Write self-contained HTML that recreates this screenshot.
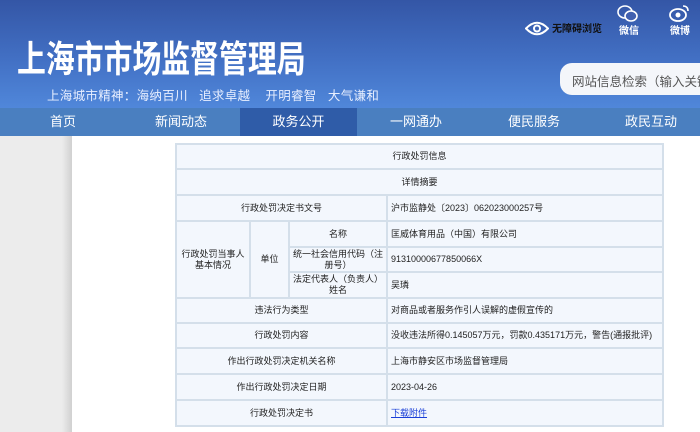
<!DOCTYPE html>
<html><head><meta charset="utf-8"><style>
*{margin:0;padding:0;box-sizing:border-box}
body{width:700px;height:432px;overflow:hidden;font-family:"Liberation Sans","Noto Sans CJK SC",sans-serif;background:#fff;position:relative}
.banner{position:absolute;left:0;top:0;width:700px;height:108px;background:linear-gradient(180deg,#3456a6 0%,#4270c4 55%,#5087da 100%)}
.title{position:absolute;left:17px;top:29px;font-size:37px;font-weight:bold;color:#fff;white-space:nowrap;transform:scaleX(0.78);transform-origin:left top;letter-spacing:0}
.slogan{position:absolute;left:47px;top:85px;font-size:12.5px;color:#e8efff;white-space:nowrap;letter-spacing:0.3px}
.search{position:absolute;left:560px;top:63px;width:160px;height:32px;border-radius:12px;background:#f4f6fa;font-size:12.5px;color:#555;padding:8px 0 0 12px;white-space:nowrap}
.acc{position:absolute;left:552px;top:20px;font-size:10px;color:#111;font-weight:bold}
.ic{position:absolute;font-size:10px;color:#fff;font-weight:bold}
.nav{position:absolute;left:0;top:108px;width:700px;height:28px;background:#4a7fc0}
.nav div{position:absolute;top:0;height:28px;line-height:28px;color:#fff;font-size:13px;text-align:center;width:118px}
.gray{position:absolute;left:0;top:136px;width:72px;height:296px;background:linear-gradient(90deg,#ececec 0,#ececec 62px,#d0d0d0 72px)}
table{position:absolute;left:175px;top:143px;width:489px;border-collapse:collapse;font-size:9px;color:#222}
td{border:2px solid #d4dfea;background:#f3f7fd;text-align:center;padding:0 2px;line-height:11px}
td.v{text-align:left;padding-left:3px}
a{color:#1a3fd8;text-decoration:underline}
</style></head><body>
<div class="banner"></div>
<div class="title">上海市市场监督管理局</div>
<div class="slogan">上海城市精神：海纳百川&nbsp;&nbsp;&nbsp;追求卓越&nbsp;&nbsp;&nbsp;&nbsp;开明睿智&nbsp;&nbsp;&nbsp;大气谦和</div>
<svg style="position:absolute;left:525px;top:20px" width="24" height="17" viewBox="0 0 24 17"><path d="M1 8.5Q12 -3 23 8.5Q12 20 1 8.5Z" fill="none" stroke="#fff" stroke-width="2"/><circle cx="12" cy="8.5" r="3" fill="none" stroke="#fff" stroke-width="2"/></svg>
<div class="acc">无障碍浏览</div>
<svg style="position:absolute;left:617px;top:5px" width="22" height="17" viewBox="0 0 22 17"><ellipse cx="8" cy="7" rx="7" ry="6" fill="none" stroke="#fff" stroke-width="1.6"/><ellipse cx="14" cy="11" rx="6" ry="5" fill="#4060b0" stroke="#fff" stroke-width="1.6"/></svg>
<div class="ic" style="left:619px;top:22px">微信</div>
<svg style="position:absolute;left:669px;top:4px" width="22" height="18" viewBox="0 0 22 18"><ellipse cx="9" cy="11" rx="8" ry="6" fill="none" stroke="#fff" stroke-width="1.8"/><circle cx="9" cy="11" r="2.5" fill="#fff"/><path d="M14 2Q19 2 19 7" fill="none" stroke="#fff" stroke-width="1.6"/></svg>
<div class="ic" style="left:670px;top:22px">微博</div>
<div class="search">网站信息检索（输入关键字</div>
<div class="nav">
<div style="left:4px">首页</div>
<div style="left:122px">新闻动态</div>
<div style="left:240px;background:#2f5ca8;width:117px">政务公开</div>
<div style="left:357px">一网通办</div>
<div style="left:475px">便民服务</div>
<div style="left:592px">政民互动</div>
</div>
<div class="gray"></div>
<table>
<colgroup><col style="width:74px"><col style="width:39px"><col style="width:98px"><col></colgroup>
<tr style="height:25px"><td colspan="4">行政处罚信息</td></tr>
<tr style="height:26px"><td colspan="4">详情摘要</td></tr>
<tr style="height:26px"><td colspan="3">行政处罚决定书文号</td><td class="v">沪市监静处〔2023〕062023000257号</td></tr>
<tr style="height:26px"><td rowspan="3">行政处罚当事人<br>基本情况</td><td rowspan="3">单位</td><td>名称</td><td class="v">匡威体育用品（中国）有限公司</td></tr>
<tr style="height:25px"><td>统一社会信用代码（注册号）</td><td class="v">91310000677850066X</td></tr>
<tr style="height:26px"><td>法定代表人（负责人）姓名</td><td class="v">吴璘</td></tr>
<tr style="height:25px"><td colspan="3">违法行为类型</td><td class="v">对商品或者服务作引人误解的虚假宣传的</td></tr>
<tr style="height:25px"><td colspan="3">行政处罚内容</td><td class="v">没收违法所得0.145057万元，罚款0.435171万元，警告(通报批评)</td></tr>
<tr style="height:26px"><td colspan="3">作出行政处罚决定机关名称</td><td class="v">上海市静安区市场监督管理局</td></tr>
<tr style="height:26px"><td colspan="3">作出行政处罚决定日期</td><td class="v">2023-04-26</td></tr>
<tr style="height:26px"><td colspan="3">行政处罚决定书</td><td class="v"><a>下载附件</a></td></tr>
</table>
</body></html>
